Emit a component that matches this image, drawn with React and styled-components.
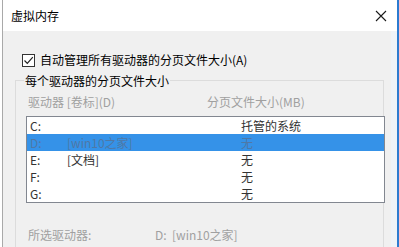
import React from "react";
import styled, { createGlobalStyle } from "styled-components";

const GlobalStyle = createGlobalStyle`
  html, body {
    margin: 0;
    padding: 0;
    background: #ffffff;
  }
  body {
    font-family: "Noto Sans CJK SC", "Noto Sans", sans-serif;
    font-size: 12px;
  }
`;

const drives = [
  { letter: "C:", label: "", size: "托管的系统" },
  { letter: "D:", label: "[win10之家]", size: "无", selected: true },
  { letter: "E:", label: "[文档]", size: "无" },
  { letter: "F:", label: "", size: "无" },
  { letter: "G:", label: "", size: "无" },
];

function App() {
  return (
    <>
      <GlobalStyle />
      <Screen>
        <Dialog>
          <TitleBar>
            <Title>虚拟内存</Title>
            <CloseButton>
              <svg width="12" height="12" viewBox="0 0 12 12">
                <path d="M1 1 L11 11 M11 1 L1 11" stroke="#1a1a1a" strokeWidth="1.1" fill="none" />
              </svg>
            </CloseButton>
          </TitleBar>
          <Body>
            <CheckRow>
              <Check>
                <svg width="11" height="11" viewBox="0 0 11 11">
                  <path d="M1.5 5.5 L4.3 8.3 L9.8 2.2" stroke="#222" strokeWidth="1.2" fill="none" />
                </svg>
              </Check>
              <span>自动管理所有驱动器的分页文件大小(A)</span>
            </CheckRow>
            <Group>
              <Legend>每个驱动器的分页文件大小</Legend>
              <ColumnHeader>
                <Cell $w={179}>驱动器 [卷标](D)</Cell>
                <Cell>分页文件大小(MB)</Cell>
              </ColumnHeader>
              <ListBox>
                {drives.map((d) => (
                  <Row key={d.letter} $selected={d.selected}>
                    <Cell $w={37}>{d.letter}</Cell>
                    <Cell $w={174}>{d.label}</Cell>
                    <Cell>{d.size}</Cell>
                  </Row>
                ))}
              </ListBox>
              <SelectedInfo>
                <Cell $w={127}>所选驱动器:</Cell>
                <Cell>D:&nbsp;&nbsp;[win10之家]</Cell>
              </SelectedInfo>
            </Group>
          </Body>
        </Dialog>
      </Screen>
    </>
  );
}

export default App;

const Screen = styled.div`
  width: 399px;
  height: 247px;
  overflow: hidden;
  padding-left: 2px;
  box-sizing: border-box;
  background: #ffffff;
`;

const Dialog = styled.div`
  height: 100%;
  display: flex;
  flex-direction: column;
  border-left: 1px solid #a9a9a9;
  border-right: 2px solid #2b7bd0;
  box-sizing: border-box;
`;

const TitleBar = styled.div`
  height: 31px;
  flex: none;
  display: flex;
  align-items: center;
  justify-content: space-between;
  background: #ffffff;
  padding: 0 10px 0 8px;
`;

const Title = styled.div`
  color: #000;
  font-size: 12px;
  line-height: 16px;
`;

const CloseButton = styled.div`
  width: 12px;
  height: 12px;
  display: flex;
`;

const Body = styled.div`
  flex: 1;
  background: #f0f0f0;
  border-right: 6px solid #eef3f8;
  padding: 21px 0 0 12px;
`;

const CheckRow = styled.label`
  display: flex;
  align-items: center;
  gap: 5px;
  margin-left: 7px;
  color: #000;
  line-height: 16px;
`;

const Check = styled.span`
  width: 13px;
  height: 13px;
  box-sizing: border-box;
  border: 1px solid #333;
  background: #fff;
  display: flex;
  align-items: center;
  justify-content: center;
`;

const Group = styled.fieldset`
  margin: 4px 0 0 0;
  width: 369px;
  box-sizing: border-box;
  border: 1px solid #dcdcdc;
  padding: 0 0 0 10px;
  min-height: 200px;
`;

const Legend = styled.legend`
  padding: 0 1px;
  margin-left: -2px;
  color: #000;
  line-height: 17px;
`;

const ColumnHeader = styled.div`
  display: flex;
  color: #a0a0a0;
  line-height: 17px;
  margin: 4px 0 6px 2px;
`;

const Cell = styled.span`
  width: ${(p) => (p.$w ? `${p.$w}px` : "auto")};
  flex: none;
  white-space: nowrap;
`;

const ListBox = styled.div`
  margin-right: -2px;
  border: 1px solid #828790;
  background: #fff;
  display: flex;
  flex-direction: column;
`;

const Row = styled.div`
  height: 17px;
  line-height: 17px;
  display: flex;
  padding-left: 3px;
  background: ${(p) => (p.$selected ? "#3592e8" : "transparent")};
  color: ${(p) => (p.$selected ? "#4f78a6" : "#333")};
`;

const SelectedInfo = styled.div`
  display: flex;
  color: #a0a0a0;
  line-height: 17px;
  margin: 23px 0 0 2px;
`;
